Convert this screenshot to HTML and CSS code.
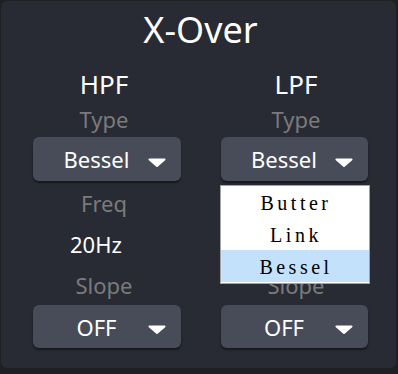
FILE: index.html
```html
<!DOCTYPE html>
<html lang="en">
<head>
  <meta charset="UTF-8" />
  <meta name="viewport" content="width=device-width, initial-scale=1.0" />
  <title>X-Over</title>
  <link rel="stylesheet" href="styles.css">
</head>
<body>
  <div class="panel">
    <h1>X-Over</h1>

    <div class="filters">
      <div class="filter filter-hpf">
        <h2>HPF</h2>
        <div class="label">Type</div>
        <div class="select-wrap">
          <div class="select">
            <span class="select-value">Bessel</span>
            <svg class="arrow" width="18" height="9" viewBox="0 0 18 9"><path d="M1.5 1.5 H16.5 L9 8 Z" fill="#fff" stroke="#fff" stroke-width="2" stroke-linejoin="round"/></svg>
          </div>
        </div>
        <div class="label label-freq">Freq</div>
        <div class="value">20Hz</div>
        <div class="label label-slope">Slope</div>
        <div class="select-wrap">
          <div class="select select-slope">
            <span class="select-value">OFF</span>
            <svg class="arrow" width="18" height="9" viewBox="0 0 18 9"><path d="M1.5 1.5 H16.5 L9 8 Z" fill="#fff" stroke="#fff" stroke-width="2" stroke-linejoin="round"/></svg>
          </div>
        </div>
      </div>

      <div class="filter filter-lpf">
        <h2>LPF</h2>
        <div class="label">Type</div>
        <div class="select-wrap">
          <div class="select">
            <span class="select-value">Bessel</span>
            <svg class="arrow" width="18" height="9" viewBox="0 0 18 9"><path d="M1.5 1.5 H16.5 L9 8 Z" fill="#fff" stroke="#fff" stroke-width="2" stroke-linejoin="round"/></svg>
          </div>
          <ul class="options">
            <li>Butter</li>
            <li>Link</li>
            <li class="selected">Bessel</li>
          </ul>
        </div>
        <!-- covered by the open list -->
        <div class="label label-freq covered">Freq</div>
        <div class="value covered">20kHz</div>
        <div class="label label-slope">Slope</div>
        <div class="select-wrap">
          <div class="select select-slope">
            <span class="select-value">OFF</span>
            <svg class="arrow" width="18" height="9" viewBox="0 0 18 9"><path d="M1.5 1.5 H16.5 L9 8 Z" fill="#fff" stroke="#fff" stroke-width="2" stroke-linejoin="round"/></svg>
          </div>
        </div>
      </div>
    </div>
  </div>
</body>
</html>
```

FILE: styles.css
```css
body {
  margin: 0;
  padding: 1px 2px 6px 1px;
  background: #1f2024;
  font-family: 'Noto Sans', 'Open Sans', sans-serif;
  color: #fff;
}

.panel {
  height: 367px;
  background: #282b33;
  border-radius: 6px;
  padding-top: 5px;
  box-sizing: border-box;
}

h1 {
  margin: 0;
  font-size: 36px;
  font-weight: normal;
  line-height: 48px;
  text-align: center;
  padding-left: 4px;
}

.filters {
  display: grid;
  grid-template-columns: 192px 192px;
  padding-left: 7px;
  margin-top: 13px;
}

.filter {
  display: flex;
  flex-direction: column;
  align-items: center;
}

h2 {
  margin: 0;
  font-size: 26px;
  font-weight: normal;
  line-height: 34px;
}

.label {
  font-size: 22px;
  line-height: 30px;
  color: #7b7b7b;
  margin-top: 3px;
}

.label-freq {
  margin-top: 7px;
}

.label-slope {
  margin-top: 11px;
}

.value {
  align-self: flex-start;
  margin: 11px 0 0 62px;
  font-size: 22px;
  line-height: 30px;
}

.covered {
  visibility: hidden;
}

.select-wrap {
  position: relative;
  align-self: flex-start;
  margin-top: 3px;
}

.filter-hpf .select-wrap {
  margin-left: 25px;
}

.filter-lpf .select-wrap {
  margin-left: 21px;
}

.select {
  display: flex;
  align-items: center;
  width: 148px;
  height: 44px;
  padding: 0 15px 0 12px;
  box-sizing: border-box;
  background: #474c58;
  border-radius: 6px;
  box-shadow: 0 2px 2px rgba(0, 0, 0, 0.45);
}

.filter-lpf .select {
  width: 147px;
}

.select-slope {
  height: 43px;
}

.label-slope + .select-wrap {
  margin-top: 5px;
}

.select-value {
  flex: 1;
  text-align: center;
  font-size: 22px;
}

.arrow {
  display: block;
  margin-top: 6px;
}

.options {
  position: absolute;
  top: 48px;
  left: -1px;
  width: 150px;
  margin: 0;
  padding: 0 0 1px;
  list-style: none;
  background: #fff;
  border: 1px solid #a3a3a3;
  box-sizing: border-box;
  font-family: 'Liberation Serif', serif;
  font-size: 20px;
  letter-spacing: 3.5px;
  color: #000;
  z-index: 2;
}

.options li {
  height: 32px;
  line-height: 34px;
  text-align: center;
  padding-left: 2px;
}

.options .selected {
  background: #c4e1fb;
}
```
